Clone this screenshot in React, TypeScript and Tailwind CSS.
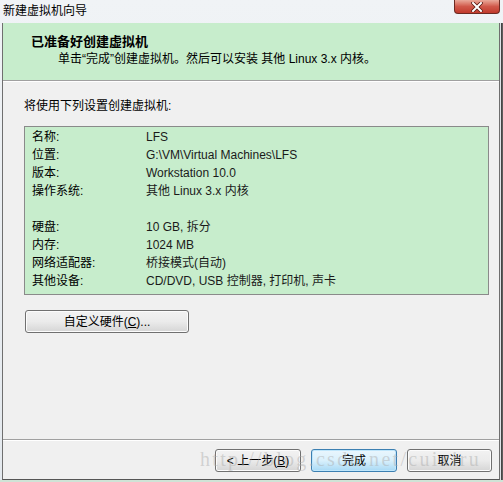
import React from "react";

const F = { fontFamily: '"Liberation Sans", "Noto Sans CJK SC", sans-serif' };

function Row({ k, v }: { k: string; v: string }) {
  return (
    <div className="flex h-[18px] items-center text-[12px] text-black">
      <div className="w-[114px] shrink-0">{k}</div>
      <div className="text-[#1a1a1a]">{v}</div>
    </div>
  );
}

function Btn({ children, def, w }: { children: React.ReactNode; def?: boolean; w: string }) {
  return (
    <div
      className={
        "flex h-[23px] items-center justify-center rounded-[3px] border text-[12px] text-black " +
        w +
        " " +
        (def
          ? "border-[#3c7fb1] bg-gradient-to-b from-[#eaf6fd] via-[#d9f0fc] to-[#a7d9f5] shadow-[inset_0_0_0_1px_#bfe6fb]"
          : "border-[#707070] bg-gradient-to-b from-[#f2f2f2] via-[#ebebeb] to-[#d5d5d5] shadow-[inset_0_0_0_1px_#fcfcfc]")
      }
    >
      {children}
    </div>
  );
}

export default function App() {
  return (
    <div className="relative h-[482px] w-[503px] overflow-hidden bg-[#cfe3d6]" style={F}>
      <div className="flex h-[480px] w-[503px] flex-col bg-gradient-to-b from-[#f0f3f6] to-[#e4e9ee]">
        {/* title bar */}
        <div className="flex h-[23px] shrink-0 items-start justify-between">
          <div className="pl-[3px] pt-[4px] text-[12px] leading-[14px] text-black">新建虚拟机向导</div>
          <div className="mr-[3px] flex h-[14px] w-[46px] items-center justify-center rounded-b-[4px] border border-t-0 border-[#6b2a22] bg-gradient-to-b from-[#e9a99b] via-[#d0584a] to-[#c13a2c]">
            <svg width="12" height="10" viewBox="0 0 12 10">
              <path d="M2 1 L10 9 M10 1 L2 9" stroke="#5a1a12" strokeWidth="3.6" strokeLinecap="square" />
              <path d="M2 1 L10 9 M10 1 L2 9" stroke="#ffffff" strokeWidth="2" strokeLinecap="square" />
            </svg>
          </div>
        </div>
        <div className="flex flex-1 flex-row">
          {/* client */}
          <div className="ml-[2px] flex flex-1 flex-col border-x border-b border-x-[#6f6f6f] border-b-[#555] bg-[#f0f0f0]">
            {/* header */}
            <div className="flex h-[58px] shrink-0 flex-col border-b border-[#a0a0a0] bg-[#c7edcc] pl-[28px] pt-[10px]">
              <div className="h-[17px] text-[13px] font-bold leading-[17px] text-black">已准备好创建虚拟机</div>
              <div className="ml-[27px] h-[18px] text-[12px] leading-[18px] text-black">
                单击“完成”创建虚拟机。然后可以安装 其他 Linux 3.x 内核。
              </div>
            </div>
            <div className="h-px bg-white" />
            {/* body */}
            <div className="mt-[15px] pl-[21px] text-[12px] leading-[18px] text-black">将使用下列设置创建虚拟机:</div>
            <div className="ml-[21px] mt-[11px] flex h-[169px] w-[465px] flex-col border border-[#8a8a8a] bg-[#c7edcc] pl-[7px] pt-[1px]">
              <Row k="名称:" v="LFS" />
              <Row k="位置:" v="G:\VM\Virtual Machines\LFS" />
              <Row k="版本:" v="Workstation 10.0" />
              <Row k="操作系统:" v="其他 Linux 3.x 内核" />
              <div className="h-[18px]" />
              <Row k="硬盘:" v="10 GB, 拆分" />
              <Row k="内存:" v="1024 MB" />
              <Row k="网络适配器:" v="桥接模式(自动)" />
              <Row k="其他设备:" v="CD/DVD, USB 控制器, 打印机, 声卡" />
            </div>
            <div className="ml-[22px] mt-[15px]">
              <Btn w="w-[164px]">
                自定义硬件(<span className="underline">C</span>)...
              </Btn>
            </div>
            <div className="flex-1" />
            <div className="h-px bg-[#a0a0a0]" />
            <div className="h-px bg-white" />
            <div className="mb-[7px] mr-[7px] mt-[8px] flex justify-end gap-[10px]">
              <Btn w="w-[86px]">
                &lt; 上一步(<span className="underline">B</span>)
              </Btn>
              <Btn w="w-[86px]" def>
                完成
              </Btn>
              <Btn w="w-[85px]">取消</Btn>
            </div>
          </div>
          {/* right frame */}
          <div className="w-px bg-[#dfe4e8]" />
          <div className="w-[2px] bg-gradient-to-r from-[#3a3a3a] to-[#6a6a6a]" />
        </div>
      </div>
      {/* watermark */}
      <div
        className="pointer-events-none absolute left-[200px] top-[447px] whitespace-nowrap text-[20px] leading-[24px] tracking-[2.3px] text-[rgba(170,170,170,0.45)]"
        style={{ fontFamily: '"Liberation Serif", serif' }}
      >
        http://blog.csdn.net/cuixiru
      </div>
    </div>
  );
}
